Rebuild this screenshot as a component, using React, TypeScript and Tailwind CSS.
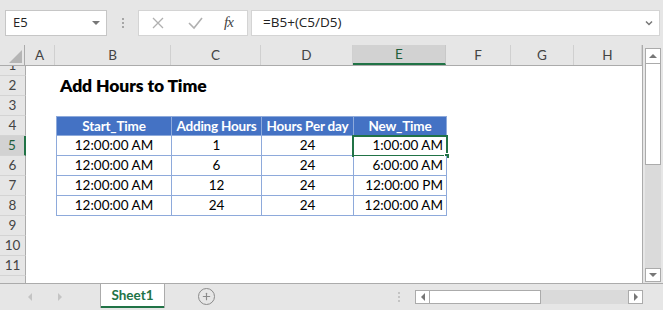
import { Plus } from 'lucide-react';

const cols = [
    { key: 'A', w: 'w-[30px]' },
    { key: 'B', w: 'w-[116px]' },
    { key: 'C', w: 'w-[90px]' },
    { key: 'D', w: 'w-[92px]' },
    { key: 'E', w: 'w-[93px]' },
    { key: 'F', w: 'w-[65px]' },
    { key: 'G', w: 'w-[63px]' },
    { key: 'H', w: 'w-[68px]' },
];

const data = [
    ['12:00:00 AM', '1', '24', '1:00:00 AM'],
    ['12:00:00 AM', '6', '24', '6:00:00 AM'],
    ['12:00:00 AM', '12', '24', '12:00:00 PM'],
    ['12:00:00 AM', '24', '24', '12:00:00 AM'],
];

const cellFont = "font-['Lato',sans-serif] text-[13.5px] text-black";

function RowHead({ n, active, h = 'h-[20px]' }: { n: string; active?: boolean; h?: string }) {
    return (
        <div
            className={`w-[26px] shrink-0 ${h} flex items-center justify-center border-b border-[#d4d4d4] ${active ? 'bg-[#d2d2d2] border-r-2 border-r-[#217346] text-[#1e5e3a]' : 'bg-[#e6e6e6] border-r border-r-[#ababab] text-[#444]'} font-['Lato',sans-serif] text-[13.5px] overflow-hidden`}
        >
            {n}
        </div>
    );
}

function EmptyRow({ n, h }: { n: string; h?: string }) {
    return (
        <div className="flex">
            <RowHead n={n} h={h} />
            <div className="flex-1 bg-white" />
        </div>
    );
}

function TableRow({ n, cells, header, active }: { n: string; cells: string[]; header?: boolean; active?: boolean }) {
    const base = header
        ? "bg-[#4472c4] text-white font-bold font-['Lato',sans-serif] text-[13.5px] tracking-[-0.2px] border-r border-b border-[#8eaadb]"
        : `${cellFont} bg-white border-r border-b border-[#8eaadb]`;
    return (
        <div className="flex h-[20px]">
            <RowHead n={n} active={active} />
            <div className="w-[30px] bg-white" />
            <div className={`w-[116px] border-l ${header ? 'border-t' : ''} ${base} flex items-center justify-center`}>{cells[0]}</div>
            <div className={`w-[90px] ${header ? 'border-t' : ''} ${base} flex items-center justify-center`}>{cells[1]}</div>
            <div className={`w-[92px] ${header ? 'border-t' : ''} ${base} flex items-center justify-center`}>{cells[2]}</div>
            <div className={`relative w-[93px] ${header ? 'border-t' : ''} ${base} flex items-center ${header ? 'justify-center' : 'justify-end pr-[3px]'}`}>
                {cells[3]}
                {active && (
                    <>
                        <div className="absolute -left-[2px] -top-[1px] -right-[2px] -bottom-[2px] border-2 border-[#217346]" />
                        <div className="absolute -right-[4px] -bottom-[4px] w-[6px] h-[6px] bg-[#217346] border border-white" />
                    </>
                )}
            </div>
            <div className="flex-1 bg-white" />
        </div>
    );
}

function FormulaBar() {
    return (
        <div className="h-[45px] bg-[#e6e6e6] flex items-center pl-[5px] pr-[3px] gap-0 font-['Open_Sans',sans-serif]">
            <div className="w-[102px] h-[26px] bg-white border border-[#c6c6c6] flex items-center justify-between pl-[7px] pr-[6px] text-[13px] text-[#222]">
                <span>E5</span>
                <span className="w-0 h-0 border-l-[4px] border-r-[4px] border-t-[4px] border-l-transparent border-r-transparent border-t-[#777]" />
            </div>
            <div className="w-[31px] flex flex-col items-center gap-[2px]">
                <span className="w-[2px] h-[2px] bg-[#a6a6a6]" />
                <span className="w-[2px] h-[2px] bg-[#a6a6a6]" />
                <span className="w-[2px] h-[2px] bg-[#a6a6a6]" />
            </div>
            <div className="w-[110px] h-[26px] bg-white border border-[#d4d4d4] flex items-center">
                <svg width="38" height="26" viewBox="0 0 38 26">
                    <path d="M14 8 L24 18 M24 8 L14 18" stroke="#b0b0b0" strokeWidth="1.3" />
                </svg>
                <svg width="38" height="26" viewBox="0 0 38 26">
                    <path d="M12 13 L17 18 L25 8" stroke="#b0b0b0" strokeWidth="1.6" fill="none" />
                </svg>
                <span className="ml-[9px] font-['Liberation_Serif',serif] italic text-[15px] text-[#444] tracking-[-1px]">fx</span>
            </div>
            <div className="ml-[3px] flex-1 h-[26px] bg-white border border-[#d4d4d4] flex items-center justify-between pl-[11px] pr-[6px] text-[13.5px] text-[#222]">
                <span>=B5+(C5/D5)</span>
                <svg width="8" height="6" viewBox="0 0 8 6">
                    <path d="M1 1.5 L4 4.5 L7 1.5" stroke="#777" strokeWidth="1.5" fill="none" />
                </svg>
            </div>
        </div>
    );
}

function ColumnHeaders() {
    return (
        <div className="flex h-[21px] bg-[#e6e6e6] border-b border-[#ababab] font-['Lato',sans-serif] text-[13.5px] text-[#444]">
            <div className="w-[26px] border-r border-[#ababab] relative">
                <svg className="absolute right-[2px] bottom-[2px]" width="13" height="13" viewBox="0 0 13 13">
                    <path d="M13 0 L13 13 L0 13 Z" fill="#b5b5b5" />
                </svg>
            </div>
            {cols.map(c => (
                <div
                    key={c.key}
                    className={`${c.w} shrink-0 flex items-center justify-center ${c.key === 'E' ? 'bg-[#d2d2d2] border-b-2 border-[#217346] text-[#1e5e3a] border-r border-r-[#c8c8c8]' : 'border-r border-[#d0d0d0]'}`}
                >
                    {c.key}
                </div>
            ))}
        </div>
    );
}

function VScroll() {
    return (
        <div className="w-[20px] bg-[#e6e6e6] flex flex-col items-center pt-[3px] pb-[1px]">
            <div className="w-[16px] h-[16px] bg-white border border-[#ababab] flex items-center justify-center">
                <span className="w-0 h-0 border-l-[4px] border-r-[4px] border-b-[4px] border-l-transparent border-r-transparent border-b-[#777]" />
            </div>
            <div className="w-[16px] flex-1 bg-[#dadada] flex flex-col">
                <div className="h-[101px] bg-white border border-[#ababab] border-t-0" />
                <div className="flex-1" />
            </div>
            <div className="w-[16px] h-[14px] bg-white border border-[#ababab] flex items-center justify-center">
                <span className="w-0 h-0 border-l-[4px] border-r-[4px] border-t-[4px] border-l-transparent border-r-transparent border-t-[#777]" />
            </div>
        </div>
    );
}

function BottomBar() {
    return (
        <div className="h-[27px] bg-[#e6e6e6] border-t border-[#ababab] flex items-start font-['Lato',sans-serif]">
            <div className="w-[100px] h-full flex items-center">
                <span className="ml-[28px] w-0 h-0 border-t-[4px] border-b-[4px] border-r-[4px] border-t-transparent border-b-transparent border-r-[#c4c4c4]" />
                <span className="ml-[26px] w-0 h-0 border-t-[4px] border-b-[4px] border-l-[4px] border-t-transparent border-b-transparent border-l-[#c4c4c4]" />
            </div>
            <div className="w-[65px] h-[24px] bg-white border-l border-r border-[#ababab] flex flex-col items-center justify-end">
                <span className="text-[13.5px] font-bold text-[#217346] leading-none mb-[4px]">Sheet1</span>
                <div className="w-full h-[2px] bg-[#217346]" />
            </div>
            <div className="w-[83px] h-full flex items-center justify-center -mt-[1px]">
                <div className="w-[17px] h-[17px] rounded-full border-[1.5px] border-[#8a8a8a] flex items-center justify-center">
                    <Plus size={11} strokeWidth={2.5} color="#8a8a8a" />
                </div>
            </div>
            <div className="flex-1 h-full flex items-center justify-end pr-[20px]">
                <div className="flex flex-col gap-[2px] mr-[15px]">
                    <span className="w-[2px] h-[2px] bg-[#c4c4c4]" />
                    <span className="w-[2px] h-[2px] bg-[#c4c4c4]" />
                    <span className="w-[2px] h-[2px] bg-[#c4c4c4]" />
                </div>
                <div className="w-[228px] h-[14px] flex bg-[#dadada]">
                    <div className="w-[15px] h-full bg-white border border-[#ababab] flex items-center justify-center">
                        <span className="w-0 h-0 border-t-[4px] border-b-[4px] border-r-[4px] border-t-transparent border-b-transparent border-r-[#777]" />
                    </div>
                    <div className="w-[111px] h-full bg-white border border-l-0 border-[#ababab]" />
                    <div className="flex-1" />
                    <div className="w-[15px] h-full bg-white border border-[#ababab] flex items-center justify-center">
                        <span className="w-0 h-0 border-t-[4px] border-b-[4px] border-l-[4px] border-t-transparent border-b-transparent border-l-[#777]" />
                    </div>
                </div>
            </div>
        </div>
    );
}

export default function App() {
    return (
        <div className="w-[663px] h-[310px] bg-[#e6e6e6] overflow-hidden flex flex-col">
            <FormulaBar />
            <div className="flex h-[238px]">
                <div className="w-[643px] flex flex-col overflow-hidden bg-white border-r border-[#ababab]">
                    <ColumnHeaders />
                    <div className="flex h-[10px]">
                        <div className="w-[26px] shrink-0 h-[10px] bg-[#e6e6e6] border-r border-b border-[#d4d4d4] border-r-[#ababab] flex items-end justify-center overflow-hidden font-['Lato',sans-serif] text-[13.5px] text-[#444] leading-[20px]">
                            1
                        </div>
                        <div className="flex-1 bg-white" />
                    </div>
                    <div className="flex h-[20px]">
                        <RowHead n="2" />
                        <div className="w-[30px]" />
                        <div className="pl-[4px] flex items-center font-['Lato',sans-serif] font-extrabold text-[17.5px] text-black tracking-[-0.1px]">
                            Add Hours to Time
                        </div>
                    </div>
                    <EmptyRow n="3" />
                    <TableRow n="4" header cells={['Start_Time', 'Adding Hours', 'Hours Per day', 'New_Time']} />
                    {data.map((r, i) => (
                        <TableRow key={i} n={String(i + 5)} cells={r} active={i === 0} />
                    ))}
                    <EmptyRow n="9" />
                    <EmptyRow n="10" />
                    <EmptyRow n="11" />
                    <EmptyRow n="" />
                </div>
                <VScroll />
            </div>
            <BottomBar />
        </div>
    );
}
